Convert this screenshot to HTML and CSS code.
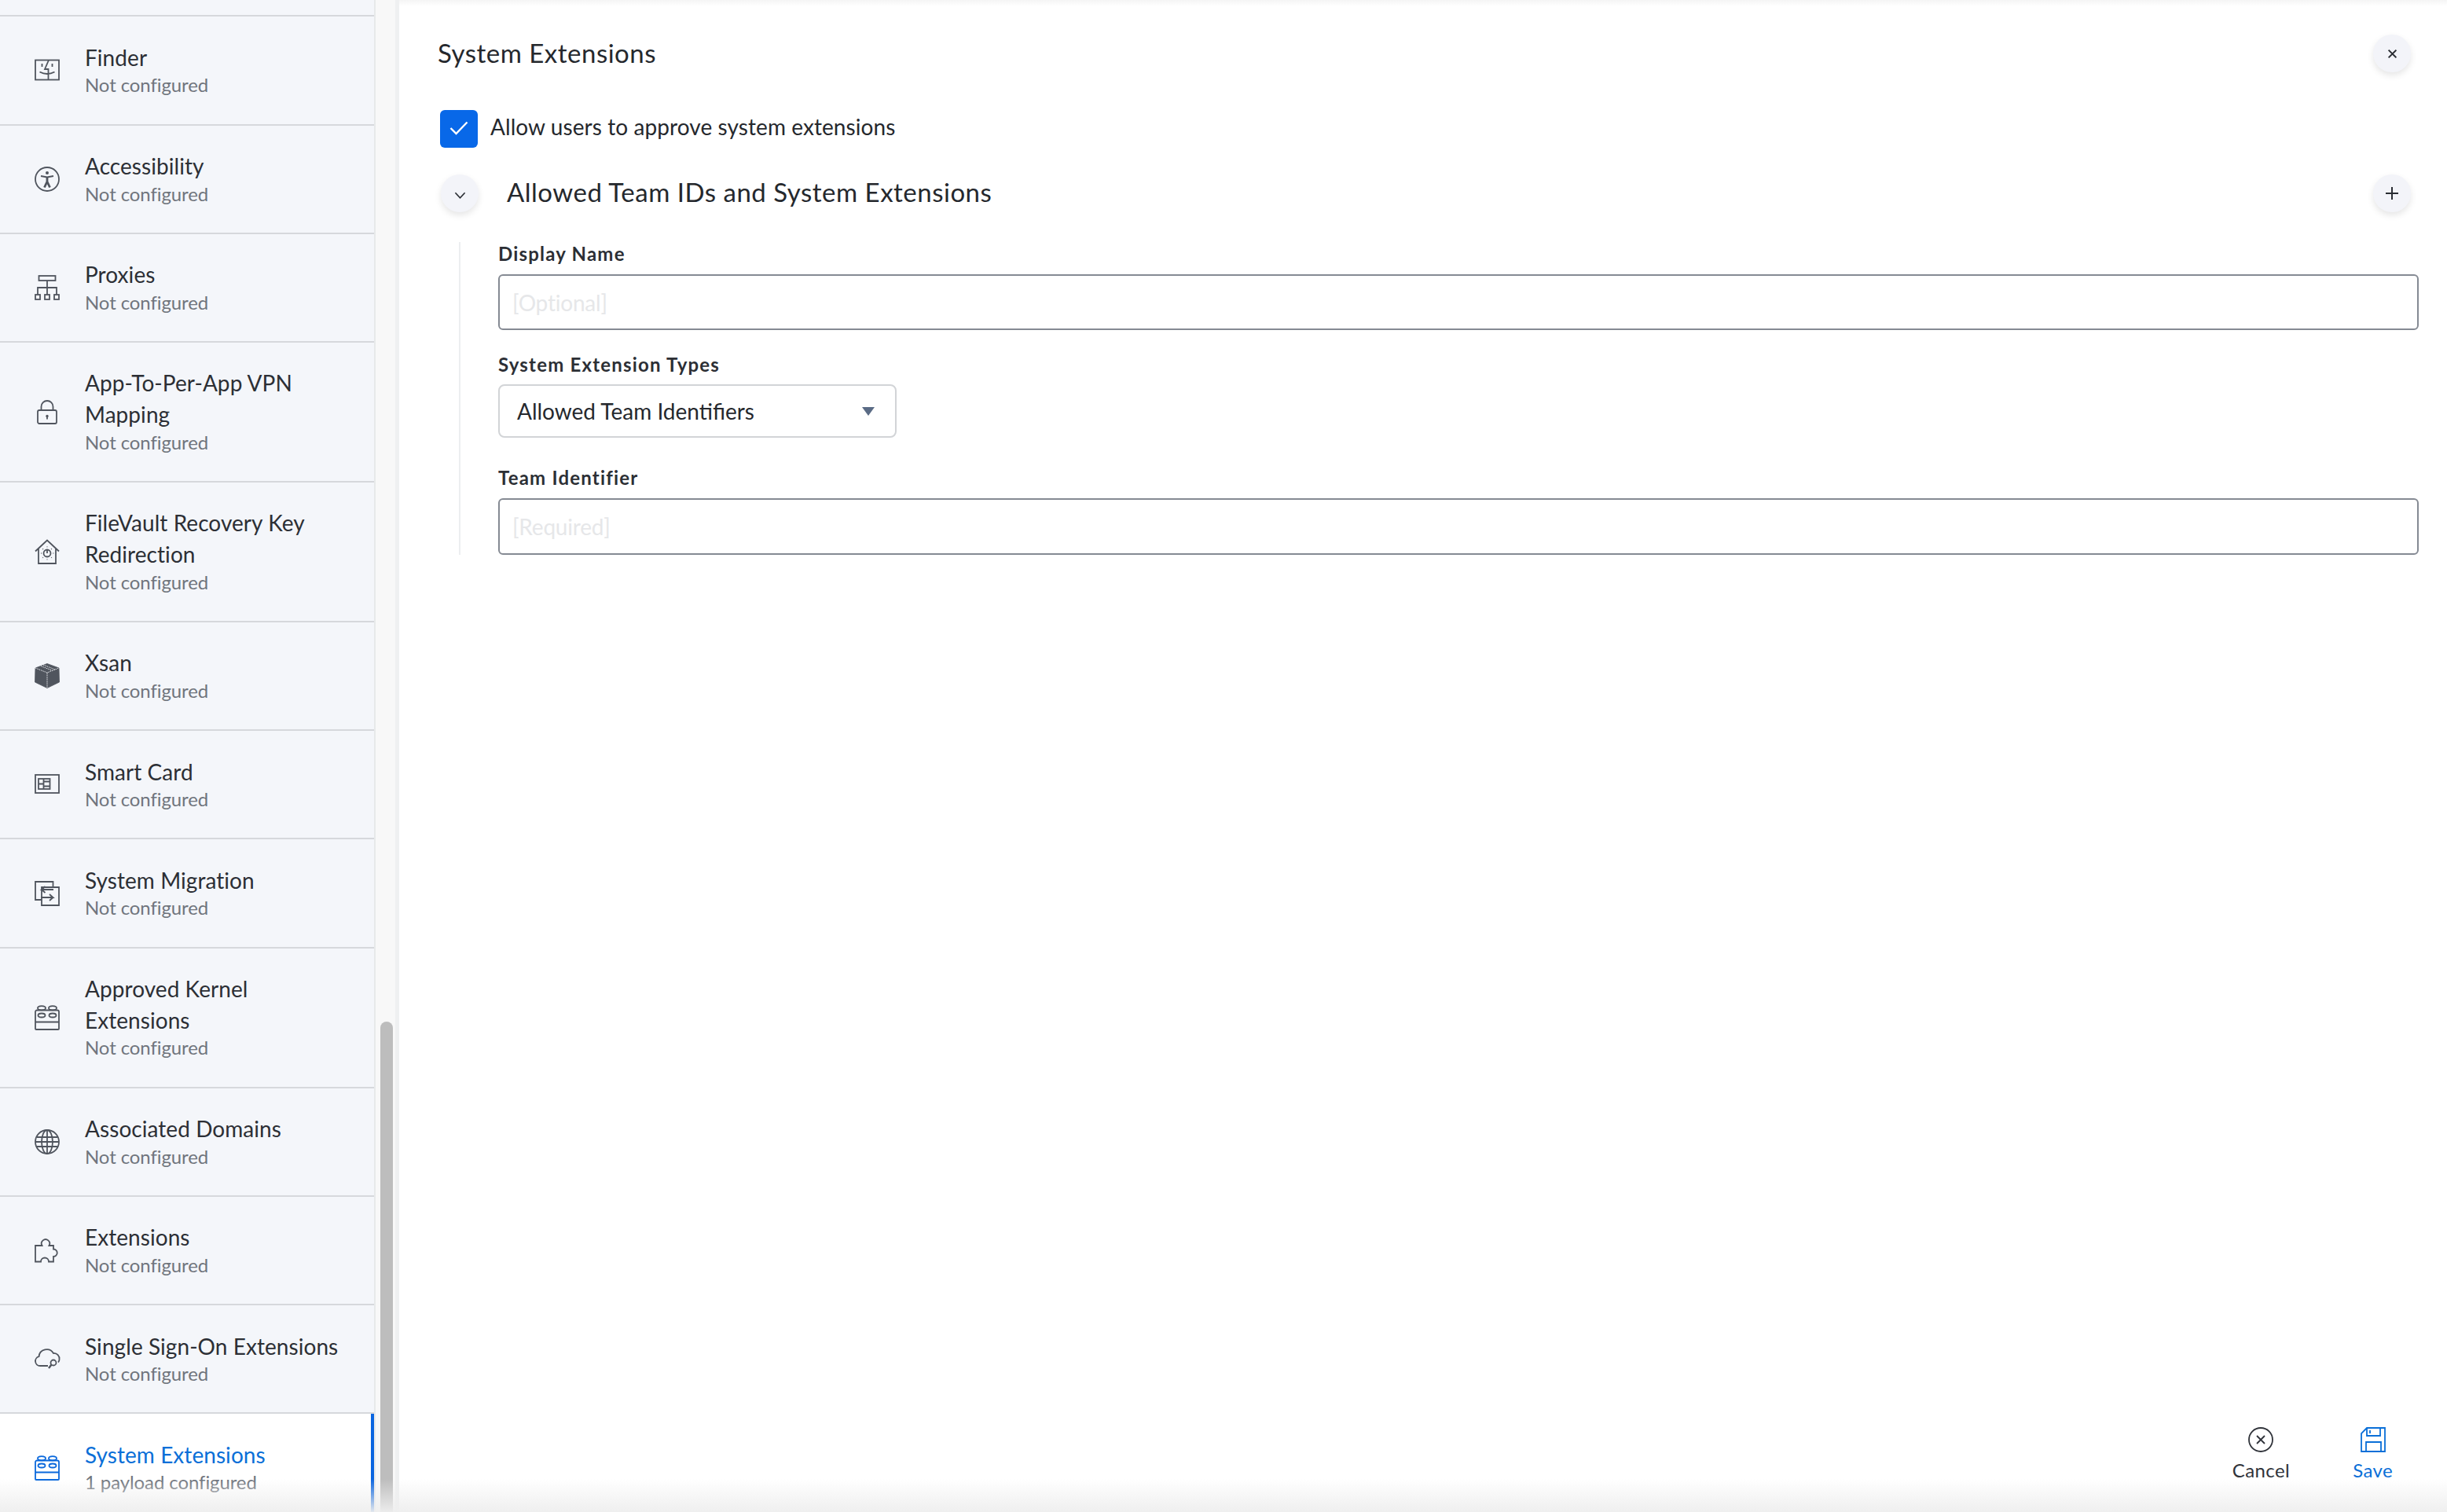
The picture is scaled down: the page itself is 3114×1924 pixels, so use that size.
FILE: index.html
```html
<!DOCTYPE html>
<html lang="en">
<head>
<meta charset="utf-8">
<title>System Extensions</title>
<link rel="stylesheet" href="styles.css">
</head>
<body>
<div class="app">
  <aside class="sidebar">
    <ul class="list">
      <li class="row-stub"></li>
      <li class="row">
        <svg class="ico" viewBox="0 0 32 32"><rect x="1" y="3.500" width="30" height="25"/><path d="M18 3.500 13 15h4.500v13.500M9.500 8v4M22.500 8v4M6.500 18.500q9.500 5 19 0"/></svg>
        <div class="txt"><div class="name">Finder</div><div class="sub">Not configured</div></div>
      </li>
      <li class="row">
        <svg class="ico" viewBox="0 0 32 32"><circle cx="16" cy="16" r="15"/><circle class="solid" cx="16" cy="8" r="2"/><path d="M8 12 16 13.500 24 12"/><path class="thick" d="M16 13v7M16 19l-3.500 7.500M16 19l3.500 7.500"/></svg>
        <div class="txt"><div class="name">Accessibility</div><div class="sub">Not configured</div></div>
      </li>
      <li class="row">
        <svg class="ico" viewBox="0 0 32 32"><rect x="5.500" y="1" width="21" height="6"/><path d="M16 7v18M4 25v-9h24v9"/><rect x="1" y="25" width="6" height="6"/><rect x="13" y="25" width="6" height="6"/><rect x="25" y="25" width="6" height="6"/></svg>
        <div class="txt"><div class="name">Proxies</div><div class="sub">Not configured</div></div>
      </li>
      <li class="row">
        <svg class="ico" viewBox="0 0 32 32"><rect x="4" y="14" width="24" height="17" rx="2"/><path d="M8.500 14V9.500a7.500 7.500 0 0 1 15 0V14"/><circle class="solid" cx="16" cy="21.500" r="1.700"/><path d="M16 22v3.500"/></svg>
        <div class="txt"><div class="name">App-To-Per-App VPN Mapping</div><div class="sub">Not configured</div></div>
      </li>
      <li class="row">
        <svg class="ico" viewBox="0 0 32 32"><path d="M1 15.500 16 1.500l15 14M5 12.500V31h22V12.500"/><circle cx="16" cy="18" r="4.500"/><path d="M16 13.500V18"/><path class="dots" d="M16 9.500v.8M16 25.500v.8M8 18h.8M23.500 18h.8M10.300 12.300l.6.6M21.200 23.200l.6.6M21.800 12.300l-.6.6M10.900 23.200l-.6.6"/></svg>
        <div class="txt"><div class="name">FileVault Recovery Key Redirection</div><div class="sub">Not configured</div></div>
      </li>
      <li class="row">
        <svg class="ico" viewBox="0 0 32 32"><defs><pattern id="grid" width="2.400" height="2.400" patternUnits="userSpaceOnUse"><rect width="2.400" height="2.400" fill="#50555e"/><rect width="1.100" height="1.100" fill="#b8bcc2"/></pattern></defs><path class="box" fill="url(#grid)" d="M16 .5 31 6l.5 18L16 31.500.5 24 1 6Z"/><path class="seam" d="M1 6l15 6 15-6M16 12v19.500M8 3.500l15 6M11 2l15 6"/></svg>
        <div class="txt"><div class="name">Xsan</div><div class="sub">Not configured</div></div>
      </li>
      <li class="row">
        <svg class="ico" viewBox="0 0 32 32"><rect x="1" y="4" width="30" height="23"/><rect x="5" y="9" width="14.500" height="13"/><path d="M11.500 9v13M5 15.500h6.500M11.500 12.500h8M11.500 18.500h8"/></svg>
        <div class="txt"><div class="name">Smart Card</div><div class="sub">Not configured</div></div>
      </li>
      <li class="row">
        <svg class="ico" viewBox="0 0 32 32"><path d="M23.500 8V1H1v23h8v7h22V8H9v16"/><path d="M24 11H9l4.500-4M9 11l4.500 4M8 21h15.500L19 17M23.500 21 19 25"/></svg>
        <div class="txt"><div class="name">System Migration</div><div class="sub">Not configured</div></div>
      </li>
      <li class="row">
        <svg class="ico" viewBox="0 0 32 32"><use href="#lego"/></svg>
        <div class="txt"><div class="name">Approved Kernel Extensions</div><div class="sub">Not configured</div></div>
      </li>
      <li class="row">
        <svg class="ico" viewBox="0 0 32 32"><circle cx="16" cy="16" r="15"/><ellipse cx="16" cy="16" rx="7" ry="15"/><path d="M16 1v30M1 16h30M3 10h26M3 22h26"/></svg>
        <div class="txt"><div class="name">Associated Domains</div><div class="sub">Not configured</div></div>
      </li>
      <li class="row">
        <svg class="ico" viewBox="0 0 32 32"><path d="M1 30.500V10h8.500a5.200 5.200 0 1 1 9 0H24v4.500a4.700 4.700 0 1 1 0 9.500v6.500h-6a5 5 0 0 0-10 0Z"/></svg>
        <div class="txt"><div class="name">Extensions</div><div class="sub">Not configured</div></div>
      </li>
      <li class="row">
        <svg class="ico" viewBox="0 0 32 32"><path d="M17 25H7a6 6 0 0 1-1.500-11.800A10 10 0 0 1 24 9a7 7 0 0 1 7.500 8q0 2-1.500 3.500"/><circle cx="24" cy="21" r="3.500"/><path class="key" d="M21.500 23.500 18 28"/></svg>
        <div class="txt"><div class="name">Single Sign-On Extensions</div><div class="sub">Not configured</div></div>
      </li>
      <li class="row row-on">
        <svg class="ico" viewBox="0 0 32 32"><use href="#lego"/></svg>
        <div class="txt"><div class="name">System Extensions</div><div class="sub">1 payload configured</div></div>
      </li>
    </ul>
    <div class="scrollbar"></div>
  </aside>

  <main class="main">
    <header class="head">
      <h1 class="heading">System Extensions</h1>
      <button class="round round-end" type="button" aria-label="Close"><svg class="glyph" viewBox="0 0 16 16"><path d="M2 2l12 12M14 2 2 14"/></svg></button>
    </header>
    <label class="check-row">
      <span class="check"><svg viewBox="0 0 24 18"><path d="M1.500 9 8.500 16 22.500 1.500"/></svg></span>
      <span class="check-text">Allow users to approve system extensions</span>
    </label>
    <div class="section-head">
      <button class="round" type="button" aria-label="Collapse"><svg class="glyph chev" viewBox="0 0 16 16"><path d="M1.500 4.500 8 11.500l6.500-7"/></svg></button>
      <h2 class="heading section-title">Allowed Team IDs and System Extensions</h2>
      <button class="round round-end" type="button" aria-label="Add"><svg class="glyph plus" viewBox="0 0 16 16"><path d="M8 0v16M0 8h16"/></svg></button>
    </div>
    <div class="section-body">
      <div class="label">Display Name</div>
      <input class="field" type="text" placeholder="[Optional]">
      <div class="label label-b">System Extension Types</div>
      <div class="select"><span>Allowed Team Identifiers</span><i class="caret"></i></div>
      <div class="label label-c">Team Identifier</div>
      <input class="field field-b" type="text" placeholder="[Required]">
    </div>
    <footer class="foot">
      <div class="action">
        <svg class="act-ico" viewBox="0 0 32 32"><circle cx="16" cy="16" r="15"/><path d="M11 11l10 10M21 11 11 21"/></svg>
        <span>Cancel</span>
      </div>
      <div class="action action-on">
        <svg class="act-ico" viewBox="0 0 32 32"><path d="M8 1h23v30H1V8Z"/><path d="M8 1v10h17V1M12 4v4M7 31V19h19v12"/></svg>
        <span>Save</span>
      </div>
    </footer>
  </main>
  <div class="fade"></div>
</div>
<svg class="sprite" aria-hidden="true"><symbol id="lego" viewBox="0 0 32 32"><path d="M3 6.500h26a2 2 0 0 1 2 2V30a1 1 0 0 1-1 1H2a1 1 0 0 1-1-1V8.500a2 2 0 0 1 2-2ZM1 21.500h30"/><ellipse cx="9" cy="3.800" rx="5" ry="2.600"/><ellipse cx="23" cy="3.800" rx="5" ry="2.600"/><ellipse cx="9" cy="13" rx="4.500" ry="2.500"/><ellipse cx="23" cy="13" rx="4.500" ry="2.500"/></symbol></svg>
</body>
</html>
```

FILE: styles.css
```css
* { box-sizing: border-box; }
html, body { margin: 0; height: 100%; }
body { font-family: "Lato", "Open Sans", sans-serif; color: #25282d; background: #fff; overflow: hidden; }

.app { position: relative; display: flex; height: 100vh; overflow: hidden; }

.sidebar { position: relative; flex: 0 0 508px; height: 100%; background: #f8f8f8; border-right: 5px solid #eff0f1; overflow: hidden; }
.list { list-style: none; margin: 0; padding: 0; width: 478px; background: #f4f6fa; border-right: 2px solid #e7e9ea; min-height: 100%; }
.row-stub { height: 21.3px; border-bottom: 2px solid #d6d8dc; }
.row { display: flex; align-items: center; padding: 32.35px 20px 34.35px 44px; border-bottom: 2px solid #d6d8dc; color: #50555e; }
.ico { flex: 0 0 32px; width: 32px; height: 32px; margin-top: 2px; overflow: visible; fill: none; stroke: currentColor; stroke-width: 1.8; }
.ico .solid { fill: currentColor; stroke: none; }
.ico .thick { stroke-width: 2.8; }
.ico .key { stroke-width: 2.4; }
.ico .dots { stroke-width: 1.4; }
.ico .box { stroke: #50555e; stroke-width: .8; }
.ico .seam { stroke: #e8eaee; stroke-width: 1; stroke-dasharray: 1.500 1; }
.txt { margin-left: 32px; min-width: 0; }
.name { font-size: 28px; line-height: 39.6px; color: #2c2f35; letter-spacing: .06px; }
.sub { font-size: 24px; line-height: 30px; color: #70757d; letter-spacing: -.1px; }
.row-on { background: #fff; border-bottom: 0; box-shadow: inset -4px 0 0 #0a65e0; color: #0a68dc; }
.row-on .name { color: #0a6fd8; }
.scrollbar { position: absolute; left: 484px; top: 1300px; bottom: -10px; width: 16px; border-radius: 8px; background: #bdbdbd; }

.main { position: relative; flex: 1 1 auto; min-width: 0; display: flex; flex-direction: column; padding: 44px 36px 38px 49px; background: linear-gradient(#f5f5f5, #fff 8px); }
.head { display: flex; align-items: center; justify-content: space-between; height: 48px; }
.heading { margin: -3px 0 0; font-size: 33px; font-weight: 400; line-height: 40px; color: #25282d; letter-spacing: .5px; }
.round { flex: 0 0 48px; display: flex; align-items: center; justify-content: center; width: 48px; height: 48px; padding: 0; border: 0; border-radius: 50%; background: #f3f4f9; box-shadow: 0 4px 8px rgba(0, 0, 0, .1); }
.round-end { margin-right: 10px; }
.glyph { width: 13px; height: 13px; fill: none; stroke: #2a2d33; stroke-width: 2.4; overflow: visible; }
.chev { width: 15px; height: 15px; stroke-width: 1.7; margin-top: 4px; }
.plus { width: 16px; height: 16px; stroke-width: 2; }

.check-row { display: flex; align-items: center; margin: 48px 0 0 3px; }
.check { flex: 0 0 48px; display: flex; align-items: center; justify-content: center; width: 48px; height: 48px; border-radius: 6px; background: #0868e8; }
.check svg { width: 24px; height: 18px; fill: none; stroke: #fff; stroke-width: 2.4; margin-top: -2px; }
.check-text { margin: -6px 0 0 16px; font-size: 28px; line-height: 40px; letter-spacing: .08px; color: #25282d; }

.section-head { display: flex; align-items: center; margin: 34px 0 0 4px; }
.section-title { flex: 1 1 auto; margin: -4px 0 0 36px; }
.section-body { margin: 38px 0 0 27px; padding-left: 48px; border-left: 2px solid #eceef0; }
.label { height: 32px; margin-bottom: 9px; font-size: 24px; font-weight: 700; line-height: 30px; letter-spacing: 1.2px; color: #2c2f35; }
.label-b { margin-top: 29px; margin-bottom: 8px; }
.label-c { margin-top: 36px; margin-bottom: 9px; }
.field { display: block; width: 100%; height: 71px; padding: 0 16px; border: 2px solid #858a93; border-radius: 6px; background: #fff; font: 400 28px "Lato", sans-serif; letter-spacing: -.2px; outline: 0; }
.field-b { height: 72px; }
.field::placeholder { color: #e6e7e9; opacity: 1; }
.select { display: flex; align-items: center; justify-content: space-between; width: 507px; height: 68px; padding: 0 26px 0 22px; border: 2px solid #d2d4d7; border-radius: 8px; font-size: 28px; letter-spacing: 0; color: #25282d; }
.caret { width: 0; height: 0; border-left: 8px solid transparent; border-right: 8px solid transparent; border-top: 11px solid #5a6b85; }

.foot { display: flex; justify-content: flex-end; gap: 80px; margin-top: auto; padding-right: 33px; }
.action { display: flex; flex-direction: column; align-items: center; gap: 8px; font-size: 24px; line-height: 30px; letter-spacing: .4px; color: #30333a; }
.action-on { color: #0a6fd8; }
.act-ico { width: 32px; height: 32px; fill: none; stroke: currentColor; stroke-width: 1.8; overflow: visible; }

.fade { position: absolute; left: 0; right: 0; bottom: 0; height: 42px; background: linear-gradient(rgba(240, 240, 240, 0), rgba(238, 238, 238, .95)); pointer-events: none; }
.sprite { position: absolute; width: 0; height: 0; overflow: hidden; }
```
